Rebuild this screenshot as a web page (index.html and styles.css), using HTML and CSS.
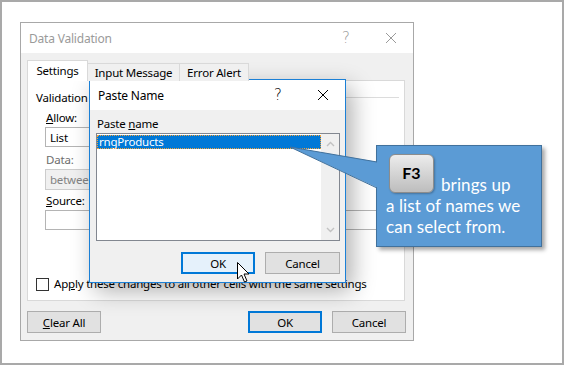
FILE: index.html
```html
<!DOCTYPE html>
<html lang="en">
<head>
    <meta charset="UTF-8">
    <title>Data Validation - Paste Name</title>
    <link rel="stylesheet" href="styles.css">
</head>
<body>
<div class="screen">

    <!-- Data Validation dialog (inactive, behind) -->
    <div class="dlg dv">
        <div class="titlebar inactive">
            <span class="title">Data Validation</span>
            <span class="help">?</span>
            <svg class="close" width="12" height="12" viewBox="0 0 12 12"><path d="M1 1 L11 11 M11 1 L1 11" /></svg>
        </div>
        <div class="dv-body">
            <div class="tabs">
                <div class="tab active">Settings</div>
                <div class="tab t-input">Input Message</div>
                <div class="tab t-error">Error Alert</div>
            </div>
            <div class="panel">
                <div class="group"><span>Validation criteria</span><span class="rule"></span></div>
                <div class="fields">
                    <div class="lbl"><u>A</u>llow:</div>
                    <div class="box combo">List</div>
                    <div class="lbl dim gap-data">Data:</div>
                    <div class="box combo disabled">between</div>
                    <div class="lbl gap-source"><u>S</u>ource:</div>
                    <div class="box source"></div>
                </div>
                <div class="check">
                    <span class="cb"></span>
                    <span>Ap<u>p</u>ly these changes to all other cells with the same settings</span>
                </div>
            </div>
            <div class="dv-buttons">
                <div class="btn"><u>C</u>lear All</div>
                <div class="spacer"></div>
                <div class="btn default">OK</div>
                <div class="btn">Cancel</div>
            </div>
        </div>
    </div>

    <!-- Paste Name dialog (active, on top) -->
    <div class="dlg pn">
        <div class="titlebar">
            <span class="title">Paste Name</span>
            <span class="help">?</span>
            <svg class="close" width="12" height="12" viewBox="0 0 12 12"><path d="M1 1 L11 11 M11 1 L1 11" /></svg>
        </div>
        <div class="pn-body">
            <div class="pn-label">Paste <u>n</u>ame</div>
            <div class="listbox">
                <div class="items">
                    <div class="item selected">rngProducts</div>
                </div>
                <div class="scroll">
                    <svg width="9" height="6" viewBox="0 0 9 6"><path d="M1 5 L4.5 1.5 L8 5" /></svg>
                    <svg width="9" height="6" viewBox="0 0 9 6"><path d="M1 1 L4.5 4.5 L8 1" /></svg>
                </div>
            </div>
            <div class="pn-buttons">
                <div class="btn default hover">OK</div>
                <div class="btn">Cancel</div>
            </div>
        </div>
    </div>

    <!-- callout pointer -->
    <svg class="wedge" width="95" height="50" viewBox="0 0 95 50">
        <polygon points="5,7 93,22 93,48" fill="#5b9bd5" />
        <path d="M92 22 L5 7 L92 48" fill="none" stroke="#41719c" stroke-width="1" />
    </svg>

    <div class="callout">
        <div class="line first">
            <span class="key">F3</span>
            <span>brings up</span>
        </div>
        <div class="line">a list of names we</div>
        <div class="line">can select from.</div>
    </div>

    <!-- mouse pointer -->
    <svg class="cursor" width="14" height="22" viewBox="0 0 14 22">
        <path d="M0.5 0.5 L0.5 17 L4.5 13 L7.5 20 L10 19 L7 12 L12 12 Z" fill="#fff" stroke="#000" stroke-width="1" stroke-linejoin="miter" />
    </svg>
</div>
</body>
</html>
```

FILE: styles.css
```css
* { box-sizing: border-box; }
body { margin: 0; font-family: "Noto Sans", "Open Sans", sans-serif; font-size: 11.5px; letter-spacing: -0.2px; color: #000; }
u { text-decoration: underline; text-underline-offset: 1px; }

.screen { position: relative; width: 564px; height: 365px; background: #fff; border: 2px solid #a9a9a9; overflow: hidden; }

/* dialogs are windows on a desktop, so they sit at their own spot */
.dlg { position: absolute; display: flex; flex-direction: column; background: #f0f0f0; }
.dv { left: 18px; top: 20px; width: 394px; height: 319px; border: 1px solid #a8a8a8; }
.pn { left: 87px; top: 77px; width: 257px; height: 204px; border: 1px solid #1b80d6; box-shadow: 6px 8px 22px rgba(0, 0, 0, 0.32); }

.titlebar { height: 30px; flex: none; display: flex; align-items: center; background: #fff; padding-left: 8px; font-size: 12px; }
.titlebar .title { flex: 1; }
.titlebar .help { width: 14px; text-align: center; font-size: 15px; font-family: "DejaVu Sans", sans-serif; font-weight: 200; margin-right: 32px; }
.titlebar .close { margin-right: 16px; }
.titlebar .close path { stroke: #000; stroke-width: 1; fill: none; }
.titlebar.inactive { color: #9a9a9a; }
.titlebar.inactive .close path { stroke: #9a9a9a; }

/* Data Validation */
.dv-body { flex: 1; display: flex; flex-direction: column; padding: 7px 7px 0 6px; }
.tabs { display: flex; align-items: flex-end; position: relative; z-index: 1; margin-bottom: -1px; }
.tab { height: 18px; display: flex; align-items: center; justify-content: center; border: 1px solid #d9d9d9; border-bottom: none; background: #f0f0f0; }
.tab.active { width: 61px; height: 21px; background: #fff; padding-bottom: 2px; }
.t-input { width: 92px; border-left: none; }
.t-error { width: 69px; border-left: none; }

.panel { height: 221px; margin-right: 1px; background: #fff; border: 1px solid #d9d9d9; display: flex; flex-direction: column; padding: 9px 5px 8px 8px; }
.group { display: flex; align-items: center; line-height: 16px; }
.group .rule { flex: 1; height: 1px; background: #dcdcdc; margin-left: 6px; margin-top: -1px; }
.fields { display: flex; flex-direction: column; padding-left: 9px; margin-top: 4px; }
.lbl { line-height: 16px; padding-left: 1px; }
.lbl.dim { color: #6d6d6d; }
.gap-data { margin-top: 5px; }
.gap-source { margin-top: 3px; }
.box { height: 20px; margin-top: 1px; border: 1px solid #b4b4b4; background: #fff; padding-left: 4px; display: flex; align-items: center; }
.combo { width: 146px; }
.box.disabled { height: 21px; background: #f0f0f0; border-color: #cccccc; color: #838383; }
.source { width: 345px; }

.check { margin-top: auto; display: flex; align-items: center; line-height: 16px; }
.cb { width: 13px; height: 13px; border: 1px solid #333; background: #fff; margin-right: 5px; margin-top: 1px; }

.dv-buttons { display: flex; margin-top: 10px; }
.spacer { flex: 1; }
.btn { width: 74px; height: 22px; display: flex; align-items: center; justify-content: center; background: #e1e1e1; border: 1px solid #adadad; }
.btn.default { border: 2px solid #0078d7; }
.dv-buttons .btn.default { margin-right: 10px; }
.btn.hover { background: #e5f1fb; }

/* Paste Name */
.pn-body { flex: 1; display: flex; flex-direction: column; padding: 6px 5px 0 6px; }
.pn-label { line-height: 16px; padding-left: 1px; }
.listbox { height: 108px; margin-top: 1px; border: 1px solid #828790; background: #fff; display: flex; }
.items { flex: 1; padding: 1px 0 0 0; }
.item { height: 14px; line-height: 13px; padding-left: 2px; }
.item.selected { background: #0078d7; color: #fff; outline: 1px dotted #f3a33a; outline-offset: -1px; }
.scroll { width: 18px; background: #f0f0f0; display: flex; flex-direction: column; justify-content: space-between; align-items: center; padding: 7px 0 7px; }
.scroll path { fill: none; stroke: #c2c2c2; stroke-width: 1.4; }
.pn-buttons { display: flex; justify-content: flex-end; gap: 10px; margin-top: 11px; }
.pn-buttons .btn:last-child { width: 75px; }

/* callout */
.wedge { position: absolute; left: 283px; top: 138px; z-index: 3; }
.callout { position: absolute; left: 374px; top: 143px; width: 166px; height: 102px; background: #5b9bd5; border: 1px solid #41719c; box-shadow: 3px 3px 4px rgba(0, 0, 0, 0.35); color: #fff; font-family: Lato, "Liberation Sans", sans-serif; font-size: 17px; letter-spacing: 0.1px; padding: 8px 0 0 9px; z-index: 2; }
.line { line-height: 21px; white-space: nowrap; }
.line.first { display: flex; align-items: flex-end; margin-left: 3px; margin-bottom: 2px; }
.line.first span:last-child { margin-left: 7px; margin-bottom: -2px; }
.key { width: 45px; height: 39px; border: 1px solid #8c8c8c; border-radius: 6px; background: linear-gradient(#ececec, #bdbdbd); color: #000; font-weight: bold; font-size: 16px; display: flex; align-items: center; justify-content: center; padding-bottom: 3px; box-shadow: 1px 1px 2px rgba(0, 0, 0, 0.25); }

.cursor { position: absolute; left: 235px; top: 260px; z-index: 4; }
```
